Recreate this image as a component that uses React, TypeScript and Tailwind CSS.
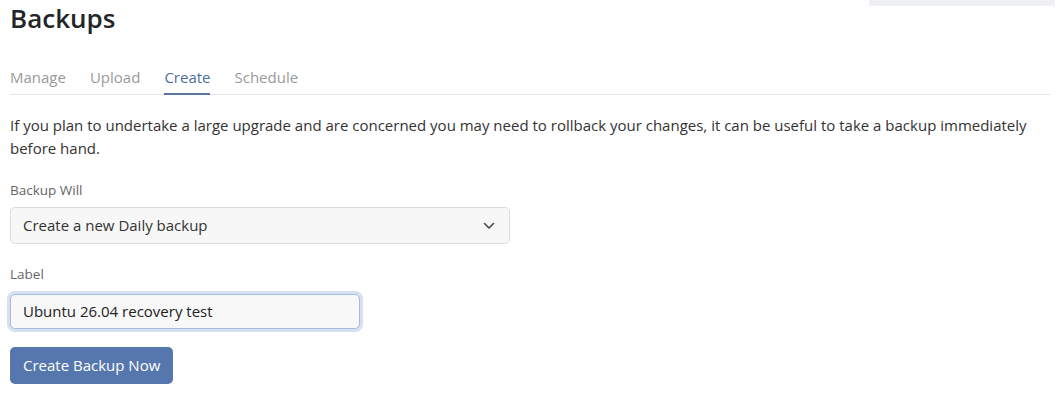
import React from "react";

export default function App() {
  const font = { fontFamily: '"Open Sans", "Noto Sans", sans-serif' };
  return (
    <div className="w-[1060px] h-[400px] bg-white overflow-hidden" style={font}>
      <div className="px-[10px]">
        <div className="flex justify-between items-start">
          <h1 className="text-[26px] leading-[36px] font-semibold text-[#222629]">Backups</h1>
          <div className="h-[6px] w-[186px] bg-[#eef0f3] mr-[-5px]" />
        </div>
        <div className="mt-[30px] flex gap-[24px] border-b border-[#e3e5e8] text-[15px] leading-[22px]">
          <span className="pb-[6px] text-[#9a9a9a]">Manage</span>
          <span className="pb-[6px] text-[#9a9a9a]">Upload</span>
          <span className="pb-[4px] text-[#4c6e9f] border-b-2 border-[#5a76a0] mb-[-1px]">Create</span>
          <span className="pb-[6px] text-[#9a9a9a]">Schedule</span>
        </div>
        <p className="mt-[19px] text-[15px] leading-[23px] text-[#333]">
          If you plan to undertake a large upgrade and are concerned you may need to rollback your changes, it can be useful to take a backup immediately before hand.
        </p>
        <div className="mt-[21px] text-[13.5px] leading-[18px] text-[#666]">Backup Will</div>
        <div className="mt-[8px] w-[500px] h-[37px] rounded-[5px] border border-[#dcdcdc] bg-[#f7f7f7] flex items-center justify-between pl-[12px] pr-[14px] text-[15px] text-[#333]">
          <span>Create a new Daily backup</span>
          <svg width="12" height="8" viewBox="0 0 12 8" fill="none">
            <path d="M1.5 1.5 L6 6 L10.5 1.5" stroke="#444" strokeWidth="1.6" strokeLinecap="round" strokeLinejoin="round" />
          </svg>
        </div>
        <div className="mt-[21px] text-[13.5px] leading-[18px] text-[#666]">Label</div>
        <div className="mt-[8px] ml-[-3px] w-[356px] rounded-[8px] p-[3px] bg-[#d5e0f0]">
          <div className="h-[35px] rounded-[5px] border border-[#a8bcdc] bg-[#f8f8f8] flex items-center pl-[12px] text-[15px] text-[#222]">
            Ubuntu 26.04 recovery test
          </div>
        </div>
        <button className="mt-[15px] h-[37px] px-[13px] rounded-[5px] bg-[#5577ae] text-white text-[15px]">
          Create Backup Now
        </button>
      </div>
    </div>
  );
}
